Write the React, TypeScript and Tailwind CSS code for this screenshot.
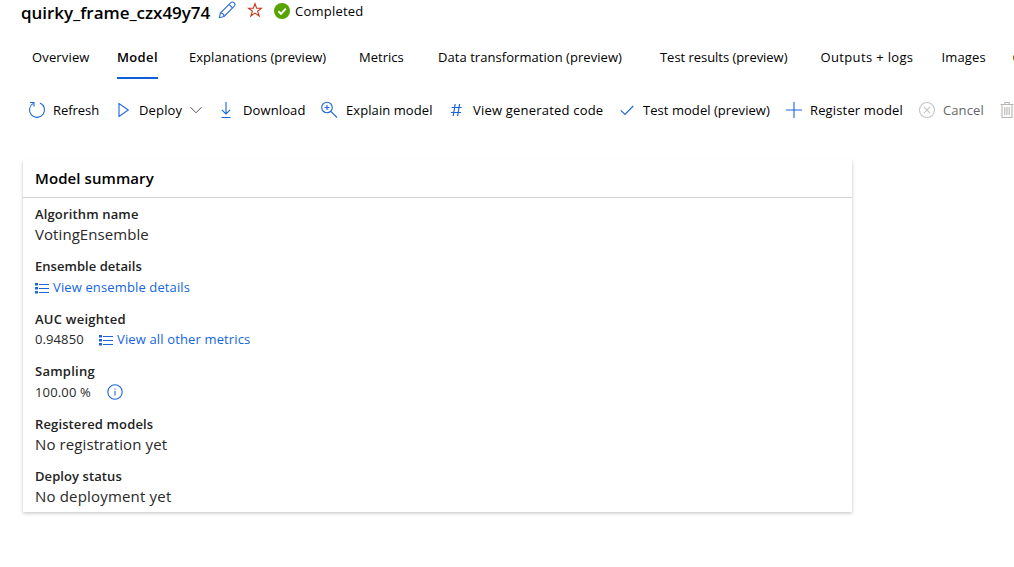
import React from "react";

type IconProps = { className?: string };

const Pencil = () => (
  <svg width="18" height="18" viewBox="0 0 18 18" fill="none" stroke="#2f6fe0" strokeWidth="1.1" strokeLinejoin="round">
    <path d="M1.3 16.7 2.4 12 12.6 1.8C13.7.8 15.2.9 16.2 1.8 17.1 2.8 17.1 4.3 16.1 5.3L5.9 15.5Z" />
    <path d="M11 3.4 14.6 7M2.4 12C4.3 12 5.9 13.5 5.9 15.5" />
  </svg>
);

const Star = () => (
  <svg width="16" height="16" viewBox="0 0 16 16" fill="none" stroke="#c4391f" strokeWidth="1.1" strokeLinejoin="miter">
    <path d="M8 1.6 9.6 6.2H14.6L10.6 9.2 12.2 14 8 11.1 3.8 14 5.4 9.2 1.4 6.2H6.4Z" />
  </svg>
);

const Completed = () => (
  <svg width="16" height="16" viewBox="0 0 16 16">
    <circle cx="8" cy="8" r="8" fill="#57a300" />
    <path d="M4.3 8.2 7 10.8 11.8 5.6" fill="none" stroke="#fff" strokeWidth="1.9" />
  </svg>
);

const Refresh = () => (
  <svg width="18" height="18" viewBox="0 0 18 18" fill="none" stroke="#1b66dc" strokeWidth="1.1">
    <path d="M12 2A7.5 7.5 0 1 1 5.2 2.4" />
    <path d="M2 1.5H6V5.5" />
  </svg>
);

const Play = () => (
  <svg width="18" height="18" viewBox="0 0 18 18" fill="none" stroke="#1b66dc" strokeWidth="1.1">
    <path d="M5 2.6V15.4L14.3 9Z" />
  </svg>
);

const Chevron = () => (
  <svg className="ml-[1px]" width="12" height="12" viewBox="0 0 12 12" fill="none" stroke="#555" strokeWidth="1">
    <path d="M.5 3.2 6 8.8 11.5 3.2" />
  </svg>
);

const Download = () => (
  <svg width="18" height="18" viewBox="0 0 18 18" fill="none" stroke="#1b66dc" strokeWidth="1.1">
    <path d="M9 1V13M4.8 8.8 9 13 13.2 8.8M4.5 16.5H13.5" />
  </svg>
);

const ZoomIn = () => (
  <svg width="18" height="18" viewBox="0 0 18 18" fill="none" stroke="#1b66dc" strokeWidth="1.1">
    <circle cx="7" cy="6.5" r="5.3" />
    <path d="M10.8 10.3 17 16.5M7 4V9M4.5 6.5H9.5" />
  </svg>
);

const Hash = () => (
  <svg width="18" height="18" viewBox="0 0 18 18" fill="none" stroke="#1b66dc" strokeWidth="1.2">
    <path d="M8.2 3 6.2 15M12.6 3 10.6 15M4.6 6.5H14.6M4 11.5H14" />
  </svg>
);

const Check = () => (
  <svg width="18" height="18" viewBox="0 0 18 18" fill="none" stroke="#1b66dc" strokeWidth="1.1">
    <path d="M2.8 9.4 7 13.4 15.2 5" />
  </svg>
);

const Plus = () => (
  <svg width="18" height="18" viewBox="0 0 18 18" fill="none" stroke="#1b66dc" strokeWidth="1.1">
    <path d="M9 1V17M1 9H17" />
  </svg>
);

const Cancel = () => (
  <svg width="18" height="18" viewBox="0 0 18 18" fill="none" stroke="#c4c4c4" strokeWidth="1.1">
    <circle cx="9" cy="9" r="7.5" />
    <path d="M5.9 5.9 12.1 12.1M12.1 5.9 5.9 12.1" />
  </svg>
);

const Trash = () => (
  <svg width="18" height="18" viewBox="0 0 18 18" fill="none" stroke="#b8b5b2" strokeWidth="1.1">
    <path d="M2.5 3.5H15.5M4 3.5V16.5H14V3.5M6.8 3.5V1.5H11.2V3.5M6.8 6V14M9 6V14M11.2 6V14" />
  </svg>
);

const List = ({ className }: IconProps) => (
  <svg className={className} width="14" height="11" viewBox="0 0 14 11" fill="#1b66dc">
    <path d="M0 0h3v2.6H0zM0 4h3v2.6H0zM0 8h3v2.6H0zM4 1h10v1H4zM4 5h10v1H4zM4 9h10v1H4z" />
  </svg>
);

const Info = () => (
  <svg width="16" height="16" viewBox="0 0 16 16" fill="none" stroke="#1b66dc" strokeWidth="1.1">
    <circle cx="8" cy="8" r="7.2" />
    <path d="M8 7V11.5M8 4.5V5.8" />
  </svg>
);

const tabs = [
  { label: "Overview", box: "w-[85px]", text: "tracking-[0.15px]" },
  { label: "Model", box: "w-[72px]", text: "font-semibold tracking-[0.35px]", active: true },
  { label: "Explanations (preview)", box: "w-[170px]", text: "tracking-[0.04px]" },
  { label: "Metrics", box: "w-[79px]", text: "" },
  { label: "Data transformation (preview)", box: "w-[222px]", text: "tracking-[0.05px]" },
  { label: "Test results (preview)", box: "w-[160.5px]", text: "tracking-[-0.04px]" },
  { label: "Outputs + logs", box: "w-[121px]", text: "tracking-[0.35px]" },
  { label: "Images", box: "w-[71px]", text: "tracking-[0.15px]" },
  { label: "Child runs", box: "w-[80px]", text: "" },
];

const commands = [
  { label: "Refresh", icon: <Refresh />, box: "w-[86px]", gap: "gap-[7px]", text: "tracking-[-0.05px]" },
  { label: "Deploy", icon: <Play />, box: "w-[103px]", gap: "gap-[7px]", text: "tracking-[0.15px]", menu: true },
  { label: "Download", icon: <Download />, box: "w-[103px]", gap: "gap-[8px]", text: "tracking-[0.12px]" },
  { label: "Explain model", icon: <ZoomIn />, box: "w-[127px]", gap: "gap-[8px]", text: "tracking-[0.08px]" },
  { label: "View generated code", icon: <Hash />, box: "w-[171px]", gap: "gap-[8px]", text: "tracking-[0.2px]" },
  { label: "Test model (preview)", icon: <Check />, box: "w-[167px]", gap: "gap-[7px]", text: "tracking-[0.05px]" },
  { label: "Register model", icon: <Plus />, box: "w-[133px]", gap: "gap-[7px]", text: "tracking-[0.15px]" },
  { label: "Cancel", icon: <Cancel />, box: "w-[80px]", gap: "gap-[7px]", text: "text-[#666] tracking-[0.1px]" },
];

function Field({ label, text, children }: { label: string; text: string; children: React.ReactNode }) {
  return (
    <div className="h-[52.4px]">
      <div className="flex h-[20px] items-center font-semibold text-[#222]">
        <span className={text}>{label}</span>
      </div>
      <div className="flex h-[21px] items-center text-[#292929]">{children}</div>
    </div>
  );
}

export default function App() {
  return (
    <div className="h-[567px] w-full overflow-hidden whitespace-nowrap bg-white font-['Open_Sans','Noto_Sans',sans-serif] text-[13px] leading-[20px] text-black">
      <header className="flex h-[24px] items-center pl-[21px]">
        <h1 className="w-[197px] pt-px text-[17px] font-semibold tracking-[-0.04px]">quirky_frame_czx49y74</h1>
        <div className="mb-[4px] w-[28px]"><Pencil /></div>
        <div className="mb-[5px] w-[28px] pl-[0.5px]"><Star /></div>
        <div className="mb-[2px] w-[21px]"><Completed /></div>
        <span className="mb-[2px] tracking-[0.22px]">Completed</span>
      </header>

      <nav className="flex h-[55px] pl-[32px] pt-[13px]">
        {tabs.map((t) => (
          <div key={t.label} className={`shrink-0 ${t.box}`}>
            <div className={`flex h-[42px] w-fit pt-[10px] ${t.active ? "border-b-2 border-[#0f5fd7]" : ""}`}>
              <span className={t.text}>{t.label}</span>
            </div>
          </div>
        ))}
      </nav>

      <div className="flex h-[62px] items-center pl-[28px]">
        {commands.map((c) => (
          <button key={c.label} className={`flex shrink-0 items-center ${c.box} ${c.gap}`}>
            {c.icon}
            <span className={c.text}>{c.label}</span>
            {c.menu && <Chevron />}
          </button>
        ))}
        <button aria-label="Delete" className="shrink-0"><Trash /></button>
      </div>

      <main className="pl-[23px] pt-[18px]">
        <section className="h-[353px] w-[829px] bg-white shadow-[0_1.6px_3.6px_rgba(0,0,0,0.22),0_0.3px_1px_rgba(0,0,0,0.16)]">
          <h2 className="flex h-[39px] items-center border-b border-[#d4d4d4] pl-[12px] text-[15px] font-semibold">
            <span className="tracking-[0.08px]">Model summary</span>
          </h2>
          <div className="pl-[12px] pt-[6px]">
            <Field label="Algorithm name" text="tracking-[0.15px]">
              <span className="mb-[2px] text-[15px] tracking-[0.07px]">VotingEnsemble</span>
            </Field>
            <Field label="Ensemble details" text="tracking-[0.04px]">
              <List className="mr-[4px] mt-[3px]" />
              <a className="tracking-[0.13px] text-[#1466dc]">View ensemble details</a>
            </Field>
            <Field label="AUC weighted" text="tracking-[0.25px]">
              <span className="w-[64px] tracking-[0.1px]">0.94850</span>
              <List className="mr-[4px] mt-[3px]" />
              <a className="tracking-[0.14px] text-[#1466dc]">View all other metrics</a>
            </Field>
            <Field label="Sampling" text="tracking-[0.25px]">
              <span className="w-[71.5px] tracking-[0.15px]">100.00 %</span>
              <Info />
            </Field>
            <Field label="Registered models" text="tracking-[0.13px]">
              <span className="text-[15px] tracking-[0.1px]">No registration yet</span>
            </Field>
            <Field label="Deploy status" text="tracking-[0.08px]">
              <span className="text-[15px] tracking-[0.18px]">No deployment yet</span>
            </Field>
          </div>
        </section>
      </main>
    </div>
  );
}
